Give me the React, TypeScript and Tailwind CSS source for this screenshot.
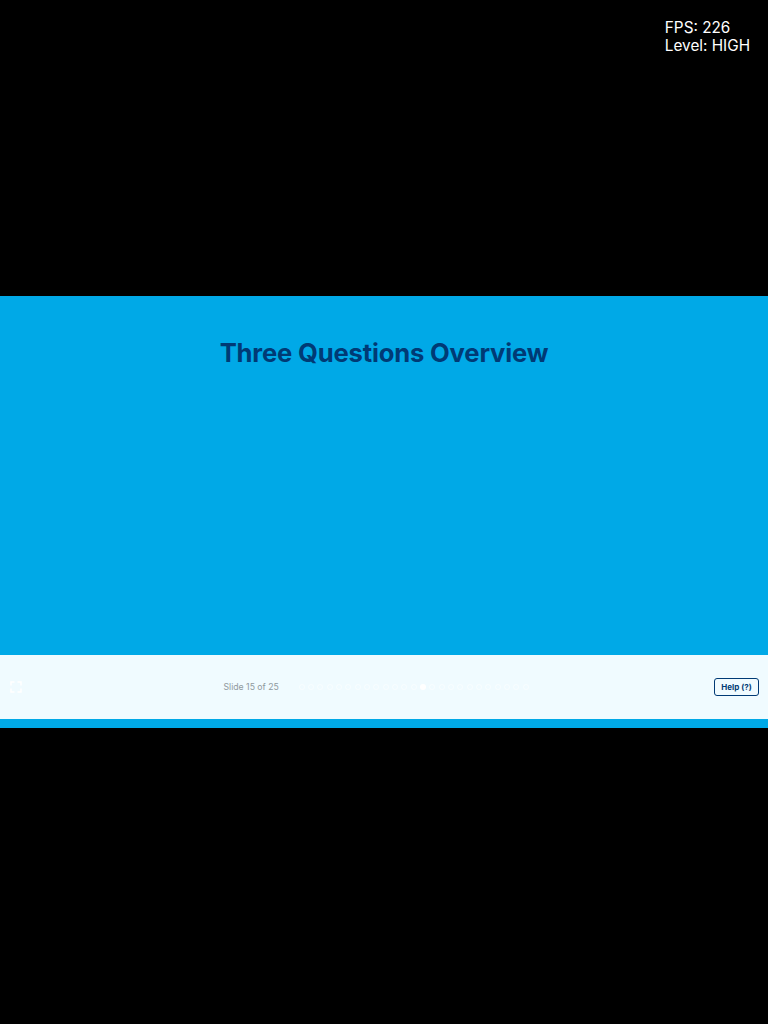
const dots = Array.from({ length: 25 }, (_, i) => i);

export default function App() {
  return (
    <div className="relative flex h-[1024px] w-full flex-col justify-center bg-black font-['Inter',sans-serif]">
      {/* FPS overlay */}
      <div className="absolute right-[18px] top-[19px] text-[15.3px] leading-[18px] text-white">
        <div>FPS: 226</div>
        <div>Level: HIGH</div>
      </div>

      {/* Slide */}
      <div className="flex h-[432px] w-full flex-col bg-[#00a9e7] pb-[9px]">
        <div className="flex-1 pt-[39px] text-center">
          <h1 className="text-[25.6px] font-bold leading-9 tracking-[-0.17px] text-[#003a75]">Three Questions Overview</h1>
        </div>

        {/* Footer */}
        <div className="flex h-16 items-center bg-[#f0fbff] px-[9px]">
          <svg width="14" height="14" viewBox="0 0 14 14" fill="none" stroke="#ffffff" strokeWidth="1.5">
            <path d="M2 5.5V2h3.5M8.5 2H12v3.5M12 8.5V12H8.5M5.5 12H2V8.5" />
          </svg>
          <span className="ml-[200.5px] mt-[2px] text-[8.7px] text-[#8f999e]">Slide 15 of 25</span>
          <div className="ml-[20px] flex items-center gap-[3.33px]">
            {dots.map((i) => (
              <span
                key={i}
                className={
                  i === 13
                    ? 'h-[6px] w-[6px] rounded-full bg-white'
                    : 'h-[6px] w-[6px] rounded-full border border-white/50'
                }
              />
            ))}
          </div>
          <button className="ml-auto h-[18px] w-[45px] rounded-[3px] border border-[#003a75] bg-transparent text-[8px] font-bold text-[#003a75]">
            Help (?)
          </button>
        </div>
      </div>
    </div>
  );
}
